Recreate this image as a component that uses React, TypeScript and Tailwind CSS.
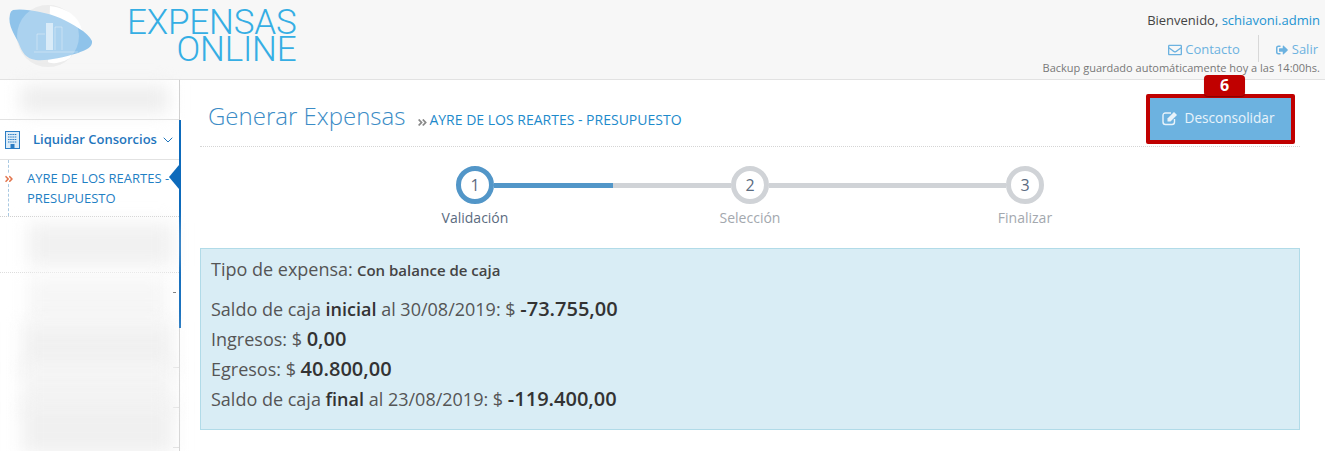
import React from "react";
import { FaRegEnvelope, FaSignOutAlt, FaAngleDoubleRight } from "react-icons/fa";
import { ChevronDown } from "lucide-react";

function Logo() {
  return (
    <svg width="100" height="72" viewBox="0 0 100 72" className="shrink-0">
      <circle cx="48" cy="36" r="31" fill="#e6e6e6" />
      <path d="M50 6 C66 8 80 16 82 32 L70 58 C60 64 50 64 48 62 Z" fill="#ffffff" />
      <path d="M13 10 C24 8 46 12 60 18 C72 24 88 32 92 41 C93 47 86 50 78 53 C62 58 46 61 36 60 C26 59 22 52 19 44 C16 36 7 26 10 14 Q10.500 11 13 10 Z" fill="#8fc3ea" />
      <circle cx="48" cy="36" r="31" fill="#ffffff" opacity="0.25" />
      <rect x="46" y="23" width="7" height="27" fill="#ffffff" opacity="0.55" />
      <path d="M37 50 V34 H45 M55 50 V27 H62 V50 M34 52 H78" stroke="#ffffff" strokeOpacity="0.5" fill="none" strokeWidth="0.7" />
    </svg>
  );
}

function BuildingIcon() {
  return (
    <svg width="15" height="18" viewBox="0 0 15 18" className="shrink-0">
      <rect x="0.500" y="0.500" width="14" height="17" fill="#dcecf8" stroke="#2a7cc4" />
      <path d="M3 3.500 H12 M3 6 H12 M3 8.500 H12 M3 11 H12" stroke="#2a7cc4" strokeWidth="1.200" strokeDasharray="1.500 0.700" />
      <rect x="5.500" y="13" width="4" height="4.500" fill="#2a7cc4" />
    </svg>
  );
}

function EditIcon() {
  return (
    <svg width="16" height="15" viewBox="0 0 16 15" className="shrink-0">
      <path d="M9 2 H3.500 Q1 2 1 4.500 V11 Q1 13.500 3.500 13.500 H10 Q12.500 13.500 12.500 11 V8" fill="none" stroke="currentColor" strokeWidth="1.400" />
      <path d="M5.500 7.500 L12 1 L15 4 L8.500 10.500 H5.500 Z" fill="currentColor" />
    </svg>
  );
}

function Smudge({ className }: { className: string }) {
  return <div className={`blur-[9px] ${className}`} />;
}

function Step({ n, active }: { n: number; active?: boolean }) {
  return (
    <div className={`w-[38px] h-[38px] rounded-full border-[5px] bg-white flex items-center justify-center text-[16px] text-[#5b6b7f] shrink-0 ${active ? "border-[#5296c8]" : "border-[#d0d3d7]"}`}>
      {n}
    </div>
  );
}

function BlurRow({ className }: { className: string }) {
  return (
    <div className="h-[40px] shrink-0 flex">
      <Smudge className={`flex-1 -my-[6px] ${className}`} />
      <div className="w-[6px] shrink-0 self-end h-px bg-[#dddddd]" />
    </div>
  );
}

export default function App() {
  return (
    <div className="w-[1325px] h-[451px] overflow-hidden bg-white text-[#333] font-['Open_Sans',sans-serif] flex flex-col">
      <header className="h-[80px] shrink-0 bg-[#f7f7f7] flex justify-between border-b border-[#e2e2e2] pr-[5px]">
        <div className="flex items-start">
          <Logo />
          <div className="ml-[27px] mt-[9px] flex flex-col items-end font-['Roboto',sans-serif] font-light text-[#35aee4] text-[35px] leading-[27px] tracking-[-0.2px]">
            <span>EXPENSAS</span>
            <span>ONLINE</span>
          </div>
        </div>
        <div className="flex flex-col items-end pt-[11px]">
          <div className="text-[13px] leading-[18px] text-[#444]">
            Bienvenido, <span className="text-[#1d94d2]">schiavoni.admin</span>
          </div>
          <div className="flex items-stretch h-[27px] mt-[6px] text-[13px] text-[#6cb2e0] pr-[2px]">
            <div className="flex items-center gap-[3px] pr-[18px] border-r border-[#d8d8d8] pt-[2px]">
              <FaRegEnvelope className="text-[14px]" />
              <span>Contacto</span>
            </div>
            <div className="flex items-center gap-[4px] pl-[17px] pt-[2px]">
              <FaSignOutAlt className="text-[12px]" />
              <span>Salir</span>
            </div>
          </div>
          <div className="text-[11px] leading-[12px] text-[#777]">Backup guardado automáticamente hoy a las 14:00hs.</div>
        </div>
      </header>

      <div className="flex flex-1 min-h-0">
        <aside className="w-[180px] shrink-0 border-r border-[#cfcfcf] flex flex-col relative">
          <div className="h-[40px] shrink-0 pl-[20px] pr-[10px] pt-[5px] border-b border-[#e2e2e2]">
            <Smudge className="h-[28px] bg-[#eeeeee]" />
          </div>
          <div className="flex flex-col border-r-[2px] border-[#0d6abb] mr-[-2px] h-[208px] shrink-0">
            <div className="h-[40px] shrink-0 flex items-center border-b border-[#e2e2e2] pl-[5px]">
              <BuildingIcon />
              <span className="ml-[13px] text-[13px] font-semibold text-[#1f76bd]">Liquidar Consorcios</span>
              <ChevronDown size={16} strokeWidth={1.5} className="ml-[3px] text-[#1f76bd]" />
            </div>
            <div className="relative h-[57px] shrink-0 border-b border-dotted border-[#cfcfcf] pl-[27px] pt-[8px] text-[13px] leading-[20px] text-[#1f80c4]">
              <div className="absolute left-[8px] top-0 bottom-0 border-l border-dashed border-[#a9c9e2]" />
              <FaAngleDoubleRight className="absolute left-[4px] top-[14px] text-[10px] text-[#e2764f] bg-white" />
              <div className="whitespace-nowrap">AYRE DE LOS REARTES -</div>
              <div>PRESUPUESTO</div>
              <div className="absolute right-0 top-[5px] w-0 h-0 border-y-[12px] border-y-transparent border-r-[10px] border-r-[#0d6abb]" />
            </div>
            <div className="h-[56px] shrink-0 flex border-b border-dotted border-[#dddddd]">
              <Smudge className="flex-1 ml-[28px] mr-[6px] my-[6px] bg-[#f1f1f1]" />
            </div>
            <div className="flex-1 flex">
              <Smudge className="flex-1 ml-[28px] mr-[6px] my-[4px] bg-[#f6f6f6]" />
              <div className="w-[3px] h-px mt-[19px] mr-[3px] bg-[#666666]" />
            </div>
          </div>
          <div className="flex-1 flex flex-col pl-[22px]">
            <BlurRow className="bg-[#f1f1f1]" />
            <BlurRow className="bg-[#f4f4f4]" />
            <BlurRow className="bg-[#f0f0f0]" />
          </div>
        </aside>

        <main className="flex-1 min-w-0 pl-[20px] pr-[25px] flex flex-col">
          <div className="h-[67px] shrink-0 border-b border-dotted border-[#d5d5d5] flex justify-between relative">
            <div className="flex items-baseline pl-[8px] pt-[19px]">
              <span className="text-[24px] leading-[33px] font-light text-[#3b8cc6]">Generar Expensas</span>
              <FaAngleDoubleRight className="ml-[12px] text-[11px] text-[#888] self-center" />
              <span className="ml-[1px] text-[14px] text-[#1d8acb]">AYRE DE LOS REARTES - PRESUPUESTO</span>
            </div>
            <div className="mt-[14px] mr-[5px] h-[50px] w-[149px] border-[4px] border-[#c00000] rounded-[2px] bg-[#6cb2e0] flex items-center justify-center gap-[7px] pb-[2px] pr-[5px] text-[13.600px] text-white/85 relative">
              <EditIcon />
              <span>Desconsolidar</span>
              <div className="absolute top-[-23px] left-[54px] w-[41px] h-[21px] rounded-[4px] bg-[#c00000] text-white font-bold text-[16px] leading-[21px] text-center shadow-[0_1px_1px_rgba(0,0,0,0.3)]">6</div>
            </div>
          </div>

          <div className="flex justify-center items-center mt-[19px] h-[38px] shrink-0">
            <Step n={1} active />
            <div className="w-[118.5px] h-[5px] bg-[#5296c8]" />
            <div className="w-[118.5px] h-[5px] bg-[#d0d3d7]" />
            <Step n={2} />
            <div className="w-[237px] h-[5px] bg-[#d0d3d7]" />
            <Step n={3} />
          </div>
          <div className="flex justify-center text-[14px] leading-[20px] mt-[4px] shrink-0 text-[#a3a8ae]">
            <div className="w-[275px] text-center text-[#5b6b7f]">Validación</div>
            <div className="w-[275px] text-center">Selección</div>
            <div className="w-[275px] text-center">Finalizar</div>
          </div>

          <div className="mt-[20px] h-[182px] shrink-0 bg-[#d9edf5] border border-[#b1dbe8] pl-[10px] pt-[8px] text-[#555]">
            <div className="text-[16px] leading-[24px]">
              <span className="text-[18px]">Tipo de expensa:</span> <span className="text-[15px] font-semibold text-[#444]">Con balance de caja</span>
            </div>
            <div className="mt-[12px] text-[18px] leading-[30px]">
              <div>Saldo de caja <span className="font-semibold text-[#333]">inicial</span> al 30/08/2019: $ <span className="text-[20px] font-semibold text-[#333]">-73.755,00</span></div>
              <div>Ingresos: $ <span className="text-[20px] font-semibold text-[#333]">0,00</span></div>
              <div>Egresos: $ <span className="text-[20px] font-semibold text-[#333]">40.800,00</span></div>
              <div>Saldo de caja <span className="font-semibold text-[#333]">final</span> al 23/08/2019: $ <span className="text-[20px] font-semibold text-[#333]">-119.400,00</span></div>
            </div>
          </div>
        </main>
      </div>
    </div>
  );
}
